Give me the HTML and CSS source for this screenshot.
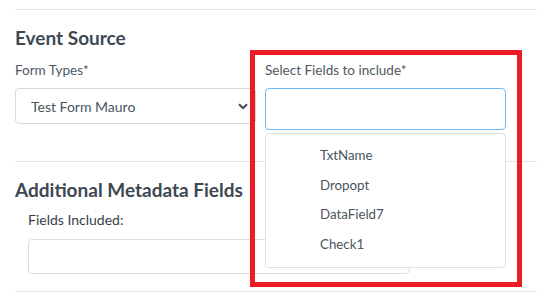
FILE: index.html
```html
<!DOCTYPE html>
<html>
    <head>
        <title>Event Source</title>
        <link rel="stylesheet" href="styles.css">
    </head>
    <body>
        <div class="page">
            <hr class="rule">
            <section class="event-source">
                <h2 class="section-title">Event Source</h2>
                <div class="field-row">
                    <div class="field">
                        <label class="field-label">Form Types*</label>
                        <div class="select-box">
                            <span>Test Form Mauro</span>
                            <svg class="chevron" width="10" height="7" viewBox="0 0 10 7">
                                <path d="M1 1.2 L5 5.2 L9 1.2" fill="none" stroke="#3d4752" stroke-width="2"/>
                            </svg>
                        </div>
                    </div>
                    <div class="field">
                        <label class="field-label">Select Fields to include*</label>
                        <div class="picker">
                            <div class="text-input focused"></div>
                            <!-- open list of options under the picker -->
                            <ul class="option-list">
                                <li>TxtName</li>
                                <li>Dropopt</li>
                                <li>DataField7</li>
                                <li>Check1</li>
                            </ul>
                        </div>
                    </div>
                </div>
            </section>
            <hr class="rule">
            <section class="metadata">
                <h2 class="section-title">Additional Metadata Fields</h2>
                <div class="included">
                    <label class="included-label">Fields Included:</label>
                    <div class="text-input included-input"></div>
                </div>
            </section>
            <hr class="rule">
            <!-- highlight frame drawn over the screenshot -->
            <div class="highlight"></div>
        </div>
    </body>
</html>
```

FILE: styles.css
```css
body {
    margin: 0;
    background-color: white;
    font-family: Lato, "Liberation Sans", sans-serif;
    color: #495057;
}

.page {
    position: relative;
    padding-top: 9px;
    padding-left: 15px;
}

/* Thin separators between sections */
.rule {
    height: 1px;
    margin: 0;
    border: 0;
    background-color: #e3e3e3;
}

.section-title {
    margin: 17px 0 0;
    font-size: 19px;
    line-height: 22px;
    font-weight: bold;
    color: #3d4853;
}

.event-source {
    padding-bottom: 31px;
}

.field-row {
    display: grid;
    grid-template-columns: 241px 241px;
    column-gap: 9px;
    align-items: start;
    margin-top: 12px;
}

.field {
    display: flex;
    flex-direction: column;
}

.picker {
    position: relative;
}

.field-label {
    margin-bottom: 9px;
    font-size: 13.5px;
    line-height: 18px;
    color: #4f5963;
}

/* Closed dropdown on the left */
.select-box {
    display: flex;
    align-items: center;
    justify-content: space-between;
    box-sizing: border-box;
    height: 36px;
    padding: 0 7px 0 15px;
    border: 1px solid #d6dadf;
    border-radius: 4px;
    font-size: 14px;
    color: #4a5560;
}

.chevron {
    margin-top: 1px;
}

.text-input {
    box-sizing: border-box;
    height: 42px;
    border: 1px solid #dcdcdc;
    border-radius: 4px;
}

.text-input.focused {
    border-color: #6cbaf4;
}

.option-list {
    position: absolute;
    top: 45px;
    left: 0;
    width: 241px;
    box-sizing: border-box;
    margin: 0;
    padding: 7px 0 8px 54px;
    list-style: none;
    background-color: white;
    border: 1px solid #e0e0e0;
    border-radius: 4px;
}

.option-list li {
    font-size: 13.3px;
    line-height: 29.5px;
    color: #4a5560;
}

.metadata {
    padding-bottom: 17px;
}

.included {
    display: flex;
    flex-direction: column;
    padding-left: 13px;
    margin-top: 10px;
}

.included-label {
    margin-bottom: 10px;
    font-size: 14px;
    line-height: 18px;
    color: #36404a;
}

.included-input {
    width: 382px;
    height: 35px;
}

/* Red annotation frame */
.highlight {
    position: absolute;
    top: 50px;
    left: 250px;
    width: 272px;
    height: 237px;
    box-sizing: border-box;
    border: 5px solid #ec1c27;
}
```
